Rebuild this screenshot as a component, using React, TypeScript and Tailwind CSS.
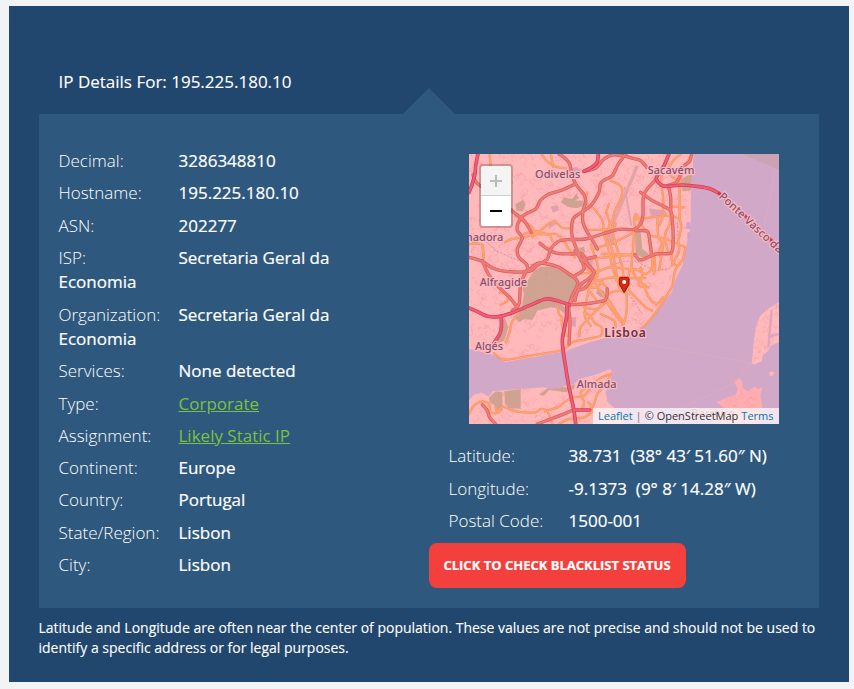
import React from "react";

type Field = { label: string; value: string; link?: boolean };

const details: Field[] = [
  { label: "Decimal:", value: "3286348810" },
  { label: "Hostname:", value: "195.225.180.10" },
  { label: "ASN:", value: "202277" },
  { label: "ISP:", value: "Secretaria Geral da Economia" },
  { label: "Organization:", value: "Secretaria Geral da Economia" },
  { label: "Services:", value: "None detected" },
  { label: "Type:", value: "Corporate", link: true },
  { label: "Assignment:", value: "Likely Static IP", link: true },
  { label: "Continent:", value: "Europe" },
  { label: "Country:", value: "Portugal" },
  { label: "State/Region:", value: "Lisbon" },
  { label: "City:", value: "Lisbon" },
];

const position: Field[] = [
  { label: "Latitude:", value: "38.731\u00a0 (38° 43′ 51.60″ N)" },
  { label: "Longitude:", value: "-9.1373\u00a0 (9° 8′ 14.28″ W)" },
  { label: "Postal Code:", value: "1500-001" },
];

function FieldRow({ label, value, link }: Field) {
  return (
    <p className="mb-2 text-[17px] leading-[24.29px] text-white">
      <span className="inline-block w-[120px] font-light">{label}</span>
      {link ? (
        <a className="text-[#7cc143] underline">{value}</a>
      ) : (
        <span className="font-medium [-webkit-text-stroke:0.2px_white]">{value}</span>
      )}
    </p>
  );
}

const land =
  "M0 0H674L668 85L665 150L666 190L663 230L655 260L650 290L640 335L620 375L608 415L575 455L530 512L505 528L440 545L395 556L340 572L290 592L200 608L110 624L75 604L0 584Z";
const south =
  "M0 738L15 722L38 716L60 728L70 712L165 704L225 700L250 705L315 690L330 676L385 660L422 645L430 652L424 685L410 715L416 745L440 765L470 810H0Z";
const east =
  "M930 445L895 465L873 487L860 520L855 560L852 590L848 628L856 632L878 622L881 604L898 590L905 575L930 565Z";
const barreiro =
  "M742 745L800 720L806 708L796 680L812 672L820 684L822 704L838 712L855 698L868 704L880 700L874 722L880 760L870 810H755L770 764Z";

// Turns "x y x y ..." into a smooth curve through every point.
function curve(points: string) {
  const n = points.split(" ").map(Number);
  const p: [number, number][] = [];
  for (let i = 0; i < n.length; i += 2) p.push([n[i], n[i + 1]]);
  let d = `M${p[0][0]} ${p[0][1]}`;
  for (let i = 0; i < p.length - 1; i++) {
    const a = p[Math.max(i - 1, 0)];
    const b = p[i];
    const c = p[i + 1];
    const e = p[Math.min(i + 2, p.length - 1)];
    d += `C${b[0] + (c[0] - a[0]) / 7} ${b[1] + (c[1] - a[1]) / 7} ${c[0] - (e[0] - b[0]) / 7} ${c[1] - (e[1] - b[1]) / 7} ${c[0]} ${c[1]}`;
  }
  return d;
}

const motorways = [
  "27 0 20 35 18 60 8 95 0 115",
  "600 0 585 35 568 60 562 75 575 92 592 97 640 93 690 98 725 105 750 118",
  "0 462 25 473 55 487 88 488 130 476 180 455 230 435 265 440 300 452",
  "294 455 292 495 280 560 290 640 300 700 314 765 320 810",
  "97 488 97 520 92 540 70 575",
  "388 0 384 25 365 42 345 52",
  "314 768 345 768 362 768",
];
const bridgeRoad = ["750 118 780 142 815 174 850 206 890 242 930 282"];
const trunks = [
  "270 0 285 10 302 30 308 60 320 90 345 122 350 145 342 170 342 205 355 235 372 262 385 285",
  "320 90 280 108 240 120 215 138 200 165 165 183 148 205 145 230 160 252 145 285 150 310 172 330 178 350",
  "470 0 448 30 430 65 405 78 394 90 390 115 365 155 330 180 312 195 308 235 315 265 335 310 375 355 335 392 322 420 300 452",
  "345 52 380 42 405 15 430 3 460 5 495 14 515 20 533 40",
  "0 310 40 322 70 342 110 352 180 352 205 334 235 315 245 285 268 262 295 257 350 255 400 240 450 226 495 226 517 205 522 180 525 120 562 75",
  "515 115 550 140 602 168 610 200 612 270 605 297 560 300 525 315 510 317 498 302",
  "598 96 605 130 605 170",
  "592 96 622 85 635 60 642 38 662 22 668 0",
  "500 230 535 232 542 260 548 305",
  "12 62 22 85 60 115",
  "125 168 165 200 187 235",
  "178 350 205 328 235 330 270 340 300 360 318 372 326 390 310 425 300 452",
  "213 268 240 288 265 298 310 300 340 300 358 335 375 358 350 400 325 412 318 440",
  "40 320 58 360 85 395 120 428 145 460",
  "172 350 155 390 150 450 130 470",
  "300 452 340 450 380 445 410 437 415 405",
  "318 365 345 345 335 315 318 290",
  "205 810 240 797 280 782 314 768",
  "40 752 55 770 62 790 80 810",
  "296 452 303 500 300 570",
  "302 455 292 490 282 545",
  "335 318 380 308",
];
const streets = [
  "62 0 66 55",
  "218 0 232 20 260 38 290 42",
  "246 0 252 38",
  "128 165 150 195 185 215 205 240 240 240 250 262",
  "190 250 220 225 245 205 262 205 280 222 310 222",
  "165 240 195 232 235 242",
  "108 265 130 255 175 248 205 232",
  "0 270 40 272 42 318",
  "235 242 260 240 285 262 300 285 318 310",
  "355 115 350 145 375 165 400 200 405 240 418 285 428 330 442 380",
  "420 150 412 175 422 205 416 240 430 290 440 345 450 400",
  "425 80 450 92 460 108 455 135 435 178 430 220 440 270 460 340 466 400",
  "440 210 428 225 360 228",
  "375 285 440 262 495 235 500 225",
  "400 300 435 300 500 305",
  "365 315 430 308 500 300",
  "345 330 360 350 380 350",
  "378 358 420 340 480 345 520 348",
  "385 380 430 370 480 372 530 372",
  "365 270 382 320 388 350 375 385 355 400",
  "330 360 365 358 378 385 400 420 412 435",
  "325 395 350 400 380 435",
  "360 408 350 450 348 490 365 515",
  "345 460 385 465 410 445",
  "330 545 335 520 355 498 400 450 418 420 450 410 475 420",
  "410 440 430 470 460 510",
  "418 435 445 480 465 505",
  "470 400 474 450 470 490 462 512",
  "482 345 478 380 482 410 500 430 530 460 550 470",
  "495 230 492 290 488 340 505 375 530 395",
  "515 340 520 368 510 395 540 400",
  "500 345 530 360 548 342 552 305",
  "525 395 540 430 560 450 575 440 582 430",
  "548 300 555 360 558 310",
  "362 400 385 400 400 380",
  "390 380 412 400 415 430",
  "265 455 270 480 278 490 280 520 295 545",
  "110 565 122 535 128 505 150 480",
  "75 598 92 612 115 617 200 602 280 588 310 565 350 556 395 545 398 520 378 508 365 488 348 475",
  "395 480 435 500 440 520",
  "520 522 545 495 575 455 590 430 610 395 618 350 640 318 650 280",
  "578 65 577 90 582 130 580 190 570 215",
  "636 0 612 20 600 45 605 65 632 82",
  "632 82 632 130 632 190 637 220 628 260 630 290 608 335",
  "668 0 640 55 632 110",
  "500 195 530 192 600 185 632 195",
  "500 180 495 200 500 228",
  "505 185 510 200 530 230",
  "540 245 590 255 645 278",
  "605 165 602 210 590 235 588 260 600 300",
  "565 190 568 250 582 270 575 320 570 348",
  "612 275 608 320 625 335 640 318",
  "585 260 570 290 575 310",
  "645 160 610 158",
  "0 780 15 755 40 742 60 750 65 775 88 776 100 758 140 772 200 775 215 765 235 772 250 810",
  "228 772 265 760 290 742 315 730 345 725 370 695 395 672 425 660",
  "362 768 375 750 385 720 410 690 425 662",
  "340 765 345 745 335 715 355 700",
  "270 810 300 795 345 790 372 768 358 745",
  "100 758 85 772 80 760",
  "92 415 112 420 115 440 95 452",
  "40 280 45 310",
];
const woods = [
  "M195 350L215 338L250 338L285 350L310 368L325 390L318 415L312 435L300 445L285 440L235 430L200 445L158 462L165 420L160 405Z",
  "M158 468L200 450L235 438L275 445L290 465L288 480L265 462L245 460L205 470L190 498L165 496L150 505L135 490Z",
  "M275 145L285 130L310 135L322 118L330 132L318 140L345 140L345 155L325 162L300 160Z",
  "M140 150L162 138L170 150L162 172L142 170Z",
  "M60 732L80 712L100 715L100 772L82 770L75 752L62 745Z",
  "M106 712L155 705L155 765L120 762L108 750Z",
  "M210 722L240 700L300 700L318 690L315 705L290 715L240 708L225 725Z",
  "M638 75L672 55L666 110L640 112Z",
  "M498 232L515 235L520 285L540 300L525 312L500 300Z",
  "M97 500L108 492L118 520L105 560L85 568Z",
  "M385 405L405 410L410 432L395 430L382 418Z",
  "M415 262L432 258L440 272L420 275Z",
  "M10 260L28 262V268L10 270Z",
  "M328 282L345 278L348 295L335 298Z",
];
const industry = [
  "M540 163L590 170L595 188L545 185Z",
  "M412 238L434 235L436 260L412 262Z",
  "M285 55L320 38L340 48L310 68Z",
  "M240 210L258 195L262 210L240 225Z",
  "M245 158L265 152L270 168L252 176Z",
  "M345 300L372 318L368 345L350 330Z",
  "M308 490L322 490L320 520L308 515Z",
  "M320 375L340 385L335 400L322 395Z",
];

// Fine residential street grain, generated once with a fixed seed.
const grain = (() => {
  let seed = 17;
  const next = () => {
    seed = (seed * 16807) % 2147483647;
    return seed / 2147483647;
  };
  let d = "";
  for (let i = 0; i < 1800; i++) {
    const x = next() * 930;
    const y = next() * 810;
    const a = next() * 26 - 13;
    const b = next() * 26 - 13;
    d += `M${x.toFixed(0)} ${y.toFixed(0)}l${a.toFixed(0)} ${b.toFixed(0)}l${(-b).toFixed(0)} ${a.toFixed(0)}`;
  }
  return d;
})();

function Lines({ paths, color, width }: { paths: string[]; color: string; width: number }) {
  return (
    <g fill="none" stroke={color} strokeWidth={width} strokeLinecap="round" strokeLinejoin="round">
      {paths.map((points) => (
        <path key={points} d={curve(points)} />
      ))}
    </g>
  );
}

function LisbonMap() {
  return (
    <svg viewBox="0 0 930 810" className="block h-[270px] w-[310px]">
      <defs>
        <clipPath id="landClip">
          <path d={land + south + east + barreiro} />
        </clipPath>
      </defs>
      <rect width="930" height="810" fill="#d2a8c8" />
      <path d="M820 0L930 48V0Z" fill="#cca3b4" />
      <g fill="#ffb9bb">
        <path d={land} />
        <path d={south} />
        <path d={east} />
        <path d={barreiro} fill="#ffadb0" />
        <path d="M900 656L908 652L917 656L910 666L902 664Z" />
      </g>
      <g clipPath="url(#landClip)">
        <path d={grain} fill="none" stroke="#f9989f" strokeWidth="2.5" opacity="0.55" />
        <g fill="#d0a292">
          {woods.map((d) => (
            <path key={d} d={d} />
          ))}
        </g>
        <g fill="#dfa0b2">
          {industry.map((d) => (
            <path key={d} d={d} />
          ))}
        </g>
        <path
          d="M200 400L225 370L260 375L300 400M215 420L250 405L290 425M245 345L240 380M175 470L215 462M180 490L190 460"
          fill="none"
          stroke="#dba695"
          strokeWidth="2"
        />
      </g>
      <path
        d="M50 262L80 290L130 312L180 332L240 330M400 345L460 322L500 322L560 350L600 345L630 300L625 200M480 420L520 480"
        fill="none"
        stroke="#b98792"
        strokeWidth="2"
        strokeDasharray="7 4"
      />
      <path
        d="M680 115L885 268M917 50L885 220M480 560L848 628L796 686L640 762M310 605L330 675"
        fill="none"
        stroke="#dfadbe"
        strokeWidth="2"
      />
      <path d="M908 467L898 580M900 548L930 540" fill="none" stroke="#dda4bd" strokeWidth="7" />
      <path d="M505 35L430 215" fill="none" stroke="#e2a3a9" strokeWidth="10" />
      <path d="M467 98L487 215" fill="none" stroke="#e0a0b2" strokeWidth="5" />
      <path d="M652 205H664V225H652ZM655 235H662V255H655Z" fill="#cfa3cd" />
      <Lines paths={streets} color="#f58d68" width={7} />
      <Lines paths={streets} color="#ffa36c" width={4.5} />
      <Lines paths={trunks} color="#df585b" width={10} />
      <Lines paths={trunks} color="#ec7c75" width={6} />
      <Lines paths={motorways} color="#d63a57" width={11} />
      <Lines paths={motorways} color="#ee5f76" width={6.5} />
      <Lines paths={bridgeRoad} color="#e4304f" width={9} />
      <g
        fill="#8a4f68"
        stroke="#f8bcc4"
        strokeWidth="7"
        strokeLinejoin="round"
        textAnchor="middle"
        paintOrder="stroke"
        className="font-['Noto_Sans',sans-serif] text-[33px] font-medium"
      >
        <text x="266" y="73" textLength="136">Odivelas</text>
        <text x="606" y="61" textLength="140">Sacavém</text>
        <text x="103" y="262" textAnchor="end">Amadora</text>
        <text x="103" y="396" textLength="142">Alfragide</text>
        <text x="60" y="588" textLength="84">Algés</text>
        <text x="383" y="701" textLength="120">Almada</text>
        <text x="732" y="790" textLength="130" fill="#a5627a">Barreiro</text>
        <text x="468" y="549" textLength="125" fill="#692e43" className="text-[36px] font-semibold">Lisboa</text>
        <text transform="translate(748 130) rotate(43)" x="0" y="0" textAnchor="start" className="text-[33px] tracking-[0.6px]">
          Ponte Vasco da Gama
        </text>
      </g>
      <path d="M455 370H476Q480 370 480 375V391L465.500 416L451 391V375Q451 370 455 370Z" fill="#d62b12" stroke="#8e170e" strokeWidth="3" />
      <circle cx="465.500" cy="384" r="6" fill="#fff" />
    </svg>
  );
}

function MapPanel() {
  return (
    <div className="relative ml-10 h-[270px] w-[310px] overflow-hidden">
      <LisbonMap />
      <div className="absolute left-[10px] top-[10px] flex w-[34px] flex-col rounded-[4px] border-2 border-black/20 bg-clip-padding">
        <button className="flex h-[30px] items-center justify-center rounded-t-[2px] border-b border-[#ccc] bg-[#f4f4f4]">
          <svg viewBox="0 0 14 14" className="mt-px size-3.5">
            <path d="M1 7H13M7 1V13" stroke="#bbb" strokeWidth="2" />
          </svg>
        </button>
        <button className="flex h-[30px] items-center justify-center rounded-b-[2px] bg-white">
          <svg viewBox="0 0 14 14" className="size-3.5">
            <path d="M1 7H13" stroke="#000" strokeWidth="2" />
          </svg>
        </button>
      </div>
      <div className="absolute bottom-0 right-0 flex h-4 items-center gap-[3px] whitespace-pre bg-white/70 pl-[5px] pr-[5.5px] text-[11px] leading-4 text-[#333]">
        <a className="text-[#0078a8]">Leaflet</a>
        <span className="text-[#777]">|</span>
        <span>© OpenStreetMap</span>
        <a className="text-[#0078a8]">Terms</a>
      </div>
    </div>
  );
}

export default function App() {
  return (
    <div className="h-[689px] w-[854px] overflow-hidden bg-[#f1f3f5] pl-[9px] pt-[6px] font-['Open_Sans','Noto_Sans',sans-serif]">
      <main className="h-[676px] w-[840px] bg-[#22476f] px-[30px] pt-16">
        <h2 className="h-[44px] pl-[19.5px] text-[17px] font-medium leading-[24px] text-white [-webkit-text-stroke:0.1px_white]">
          IP Details For: 195.225.180.10
        </h2>
        <section className="relative flex h-[494px] bg-[#2e587d] pl-[19.5px] pt-[35.15px]">
          <svg viewBox="0 0 52 26" className="absolute -top-[26px] left-[364px] h-[26px] w-[52px]">
            <path d="M0 26L26 0L52 26Z" fill="#2e587d" />
          </svg>
          <div className="w-[290px]">
            {details.map((field) => (
              <FieldRow key={field.label} {...field} />
            ))}
          </div>
          <div className="ml-[80.5px] w-[370px] pt-[4.85px]">
            <MapPanel />
            <div className="pl-[19.5px] pt-[20.4px]">
              {position.map((field) => (
                <FieldRow key={field.label} {...field} />
              ))}
            </div>
            <button className="mt-[9.7px] block h-[45px] w-[257px] rounded-[8px] bg-[#f3403d] pr-px text-[13px] font-bold text-white [-webkit-text-stroke:0.2px_white]">
              CLICK TO CHECK BLACKLIST STATUS
            </button>
          </div>
        </section>
        <p className="-ml-[0.5px] pt-[10px] text-[14px] font-medium leading-5 text-white [-webkit-text-stroke:0.1px_white]">
          Latitude and Longitude are often near the center of population. These values are not precise and should not be used to
          identify a specific address or for legal purposes.
        </p>
      </main>
    </div>
  );
}
